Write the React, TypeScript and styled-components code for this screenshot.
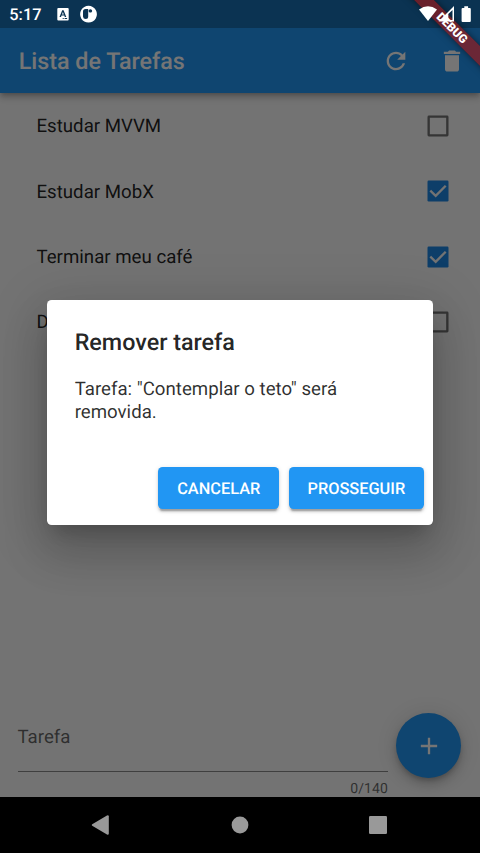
import React from "react";
import styled, { createGlobalStyle } from "styled-components";

const Global = createGlobalStyle`
  * { box-sizing: border-box; }
  html, body { margin: 0; padding: 0; }
  body { font-family: Roboto, sans-serif; background: #000; overflow: hidden; text-rendering: geometricPrecision; }
`;

const Device = styled.div`
  position: relative;
  width: 480px;
  height: 853px;
  overflow: hidden;
  display: flex;
  flex-direction: column;
  background: #000;
`;

const Screen = styled.div`
  position: relative;
  height: 797.2px;
  display: flex;
  flex-direction: column;
  overflow: hidden;
  background: #fafafa;
`;

const StatusStrip = styled.div`
  height: 28px;
  flex: none;
  background: #1a6fb2;
  position: relative;
  z-index: 1;
`;

const AppBar = styled.header`
  height: 65.3px;
  flex: none;
  display: flex;
  align-items: center;
  padding: 0 14px 0 18.67px;
  background: #2196f3;
  color: #fff;
  box-shadow: 0 2px 4.6px -1px rgba(0, 0, 0, 0.2), 0 4.6px 5.8px rgba(0, 0, 0, 0.14), 0 1px 11.6px rgba(0, 0, 0, 0.12);
`;

const AppTitle = styled.h1`
  flex: 1;
  margin: 1px 0 0;
  font-size: 23.33px;
  line-height: 28px;
  font-weight: 500;
`;

const BarIcon = styled.svg`
  width: 28px;
  height: 28px;
  fill: #fff;
  margin-left: 28px;
`;

const List = styled.ul`
  flex: 1;
  margin: 0;
  padding: 0 31px 0 36.5px;
  list-style: none;
`;

const Item = styled.li`
  height: 65.33px;
  display: flex;
  align-items: center;
  justify-content: space-between;
`;

const ItemTitle = styled.span`
  padding-top: 0.6px;
  font-size: 18.67px;
  line-height: 22px;
  color: rgba(0, 0, 0, 0.87);
`;

const CheckboxIcon = styled.svg`
  flex: none;
  width: 22px;
  height: 22px;
  fill: none;
  stroke-width: 2.33;
`;

const Composer = styled.div`
  height: 105px;
  flex: none;
  display: flex;
  padding: 0 18.67px 0 17.5px;
`;

const Field = styled.div`
  flex: 1;
  display: flex;
  flex-direction: column;
`;

const FieldLabel = styled.div`
  flex: none;
  height: 79.6px;
  padding-top: 32.4px;
  border-bottom: 1.17px solid rgba(0, 0, 0, 0.45);
  font-size: 18.67px;
  line-height: 24px;
  color: rgba(0, 0, 0, 0.6);
`;

const Counter = styled.div`
  flex: none;
  padding-top: 9px;
  text-align: right;
  font-size: 14px;
  line-height: 17px;
  letter-spacing: 0.1px;
  color: rgba(0, 0, 0, 0.6);
`;

const AddButton = styled.div`
  width: 65.33px;
  height: 65.33px;
  margin: 20.7px 0 0 8px;
  border-radius: 50%;
  display: flex;
  align-items: center;
  justify-content: center;
  background: #2196f3;
  box-shadow: 0 3.5px 5.8px -1.2px rgba(0, 0, 0, 0.2), 0 7px 11.7px rgba(0, 0, 0, 0.14), 0 1.2px 21px rgba(0, 0, 0, 0.12);
`;

const AddIcon = styled.svg`
  width: 28px;
  height: 28px;
  fill: #fff;
`;

const Scrim = styled.div`
  position: absolute;
  inset: 0;
  z-index: 2;
  display: flex;
  flex-direction: column;
  align-items: center;
  padding-top: 299.8px;
  background: rgba(0, 0, 0, 0.54);
`;

const Dialog = styled.section`
  width: 386.67px;
  height: 225.2px;
  display: flex;
  flex-direction: column;
  border-radius: 4.67px;
  background: #fff;
  padding: 28px 9.33px 16.4px 28px;
  box-shadow: 0 12.8px 17.5px -8px rgba(0, 0, 0, 0.2), 0 28px 44px 3.5px rgba(0, 0, 0, 0.14), 0 10.5px 53px 9.3px rgba(0, 0, 0, 0.12);
`;

const DialogTitle = styled.h2`
  margin: 0;
  font-size: 23.33px;
  line-height: 28px;
  font-weight: 500;
  color: rgba(0, 0, 0, 0.87);
`;

const DialogText = styled.p`
  margin: 22.6px 0 0;
  width: 300px;
  font-size: 18.67px;
  line-height: 22.4px;
  color: rgba(0, 0, 0, 0.82);
`;

const Actions = styled.div`
  flex: 1;
  display: flex;
  align-items: flex-end;
  justify-content: flex-end;
  gap: 9.33px;
`;

const Button = styled.button<{ $width: number }>`
  width: ${(p) => p.$width}px;
  height: 42px;
  padding: 2.6px 0 0;
  border: 0;
  border-radius: 4.67px;
  background: #2196f3;
  color: #fff;
  font: 500 16.33px/20px Roboto, sans-serif;
  text-rendering: geometricPrecision;
  box-shadow: 0 3.5px 1.2px -2.3px rgba(0, 0, 0, 0.2), 0 2.3px 2.3px rgba(0, 0, 0, 0.14), 0 1.2px 5.8px rgba(0, 0, 0, 0.12);
`;

const Banner = styled.div`
  position: absolute;
  z-index: 3;
  top: 21px;
  right: -52px;
  width: 160px;
  height: 14px;
  transform: rotate(45deg);
  background: rgba(160, 22, 22, 0.64);
  box-shadow: 0 0 7px rgba(0, 0, 0, 0.5);
  color: #fff;
  font-size: 11.9px;
  line-height: 14px;
  font-weight: 900;
  text-align: center;
`;

const StatusBar = styled.div`
  position: absolute;
  z-index: 4;
  top: 0;
  left: 0;
  width: 480px;
  height: 28px;
  display: flex;
  align-items: center;
  padding: 0 8px 0 9.3px;
  color: #fff;
`;

const Clock = styled.span`
  width: 47px;
  padding-top: 1px;
  font-size: 16.33px;
  font-weight: 500;
`;

const StatusIcons = styled.svg`
  height: 28px;
  flex: none;
`;

const Spacer = styled.div`
  flex: 1;
`;

const NavBar = styled.nav`
  flex: 1;
  display: flex;
  align-items: center;
  justify-content: center;
  gap: 110.4px;
`;

const NavIcon = styled.svg`
  width: 28px;
  height: 28px;
  fill: #999;
`;

const tasks = [
  { title: "Estudar MVVM", done: false },
  { title: "Estudar MobX", done: true },
  { title: "Terminar meu café", done: true },
  { title: "Dormir", done: false },
];

function Checkbox({ checked }: { checked: boolean }) {
  return (
    <CheckboxIcon viewBox="0 0 22 22">
      {checked ? (
        <>
          <rect x="0.500" y="0.500" width="21" height="21" rx="1.200" fill="#1e88e5" />
          <path d="M3.300 10.600 8.700 15.800 18.700 5.700" stroke="#fafafa" />
        </>
      ) : (
        <rect x="1.670" y="1.670" width="18.670" height="18.670" rx="0.300" stroke="rgba(0,0,0,0.54)" />
      )}
    </CheckboxIcon>
  );
}

export default function App() {
  return (
    <Device>
      <Global />
      <Screen>
        <StatusStrip />
        <AppBar>
          <AppTitle>Lista de Tarefas</AppTitle>
          <BarIcon viewBox="0 0 24 24">
            <path d="M17.65 6.35C16.2 4.9 14.21 4 12 4c-4.42 0-7.99 3.58-7.99 8s3.57 8 7.99 8c3.73 0 6.84-2.55 7.73-6h-2.08c-.82 2.33-3.04 4-5.65 4-3.31 0-6-2.69-6-6s2.69-6 6-6c1.66 0 3.14.69 4.22 1.78L13 11h7V4l-2.35 2.35z" />
          </BarIcon>
          <BarIcon viewBox="0 0 24 24">
            <path d="M6 19c0 1.1.9 2 2 2h8c1.1 0 2-.9 2-2V7H6v12zM19 4h-3.500l-1-1h-5l-1 1H5v2h14V4z" />
          </BarIcon>
        </AppBar>
        <List>
          {tasks.map((t) => (
            <Item key={t.title}>
              <ItemTitle>{t.title}</ItemTitle>
              <Checkbox checked={t.done} />
            </Item>
          ))}
        </List>
        <Composer>
          <Field>
            <FieldLabel>Tarefa</FieldLabel>
            <Counter>0/140</Counter>
          </Field>
          <AddButton>
            <AddIcon viewBox="0 0 24 24">
              <path d="M19 13h-6v6h-2v-6H5v-2h6V5h2v6h6v2z" />
            </AddIcon>
          </AddButton>
        </Composer>
        <Scrim>
          <Dialog>
            <DialogTitle>Remover tarefa</DialogTitle>
            <DialogText>Tarefa: "Contemplar o teto" será removida.</DialogText>
            <Actions>
              <Button $width={121.3}>CANCELAR</Button>
              <Button $width={135.3}>PROSSEGUIR</Button>
            </Actions>
          </Dialog>
        </Scrim>
        <Banner>DEBUG</Banner>
      </Screen>
      <NavBar>
        <NavIcon viewBox="0 0 28 28">
          <path d="M4.200 13.200 19 4.500Q20.600 3.800 20.800 5.300V22.700Q20.600 24.300 19 23.500L4.200 14.800Q3.200 14 4.200 13.200Z" />
        </NavIcon>
        <NavIcon viewBox="0 0 28 28">
          <circle cx="14" cy="14" r="8.400" />
        </NavIcon>
        <NavIcon viewBox="0 0 28 28">
          <rect x="5" y="5" width="18" height="18" rx="1.300" />
        </NavIcon>
      </NavBar>
      <StatusBar>
        <Clock>5:17</Clock>
        <StatusIcons width="42" viewBox="56 0 42 28" fill="#fff">
          <path
            fillRule="evenodd"
            d="M58.300 8h9.400q1 0 1 1v10.400q0 1-1 1h-9.400q-1 0-1-1V9q0-1 1-1zM62.200 10.300 59.500 17h1.500l.5-1.400h2.800l.5 1.400h1.500l-2.700-6.700zM62.900 12l.9 2.400h-1.800zM62.700 18v1h1v-1zM64.600 18v1h2.500v-1z"
          />
          <path
            fillRule="evenodd"
            d="M88.500 5.800a8.400 8.400 0 1 0 .01 0zM83 11.500q0-2.500 2.500-2.500h2.700v7.500q0 2.500-2.500 2.500t-2.700-2.500zM90.400 9.200a1.700 1.700 0 1 1-.01 0z"
          />
        </StatusIcons>
        <Spacer />
        <StatusIcons width="56" viewBox="416 0 56 28" fill="#fff">
          <path d="M428 21 419 9.600Q428 2.800 437 9.600Z" />
          <path fillRule="evenodd" d="M438.500 21.500 454 6v15.500zM448.300 14v6h4.200V10z" />
          <path d="M462.600 8h1.700V6.200h3.800V8h1.700q1 0 1 1v12q0 1-1 1h-7.200q-1 0-1-1V9q0-1 1-1z" />
        </StatusIcons>
      </StatusBar>
    </Device>
  );
}
